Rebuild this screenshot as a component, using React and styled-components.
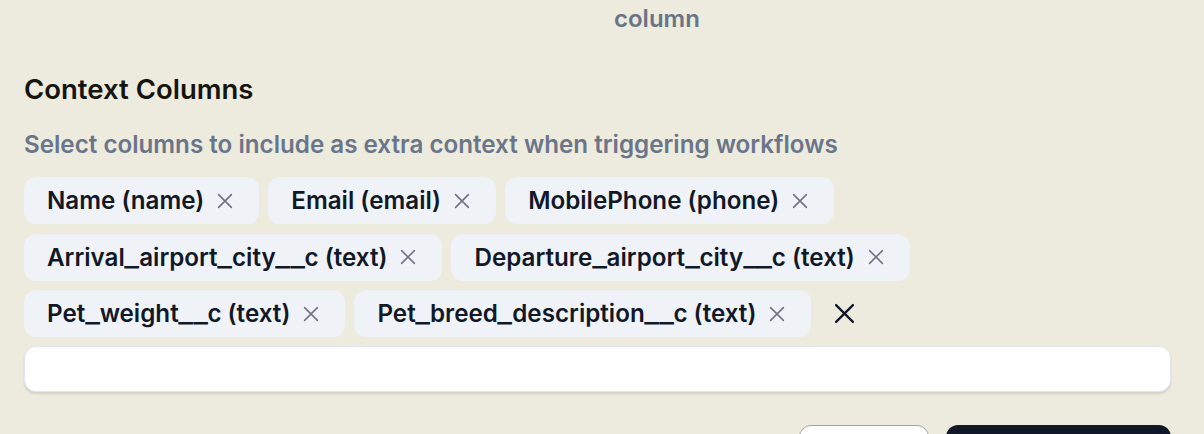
import React from "react";
import styled, { createGlobalStyle } from "styled-components";

const GlobalStyle = createGlobalStyle`
  html, body {
    margin: 0;
    padding: 0;
    background: #ecebdd;
    font-family: Inter, "Noto Sans", sans-serif;
    overflow: hidden;
  }
`;

const Page = styled.div`
  width: 1204px;
  height: 434px;
  box-sizing: border-box;
  padding: 0 33px 0 24px;
  background: #ecebdd;
  overflow: hidden;
`;

const ColumnLabel = styled.div`
  padding-left: 590px;
  padding-top: 4px;
  font-size: 24px;
  line-height: 30px;
  font-weight: 600;
  color: #6b7487;
`;

const Heading = styled.h2`
  margin: 38px 0 0;
  font-size: 27.5px;
  line-height: 34px;
  font-weight: 600;
  color: #16140f;
`;

const Subtitle = styled.p`
  margin: 24px 0 0;
  font-size: 24.2px;
  line-height: 30px;
  font-weight: 600;
  color: #6b7589;
`;

const TagList = styled.div`
  display: flex;
  flex-wrap: wrap;
  align-items: center;
  gap: 9.5px 9px;
  margin-top: 17px;
`;

const Tag = styled.div`
  display: flex;
  align-items: center;
  gap: 13px;
  height: 47px;
  box-sizing: border-box;
  padding: 0 26px 0 23px;
  border-radius: 12px;
  background: #eff2f7;
  font-size: 24.2px;
  font-weight: 600;
  color: #111827;
  white-space: nowrap;
`;

const Underscore = styled.span`
  display: inline-block;
  margin: 0 1.5px;
  transform: scaleX(1.3);
`;

const RemoveButton = styled.span`
  display: flex;
  color: #6b7280;
  flex: none;
`;

const ClearButton = styled.button`
  display: flex;
  align-items: center;
  justify-content: center;
  margin-left: 14px;
  padding: 0;
  border: none;
  background: transparent;
  color: #111827;
  cursor: pointer;
`;

const Input = styled.input`
  display: block;
  width: 100%;
  height: 46px;
  box-sizing: border-box;
  margin-top: 9px;
  border: 1px solid #e2e6ee;
  border-radius: 12px;
  background: #ffffff;
  box-shadow: 0 2px 2px rgba(30, 41, 59, 0.12);
  font-size: 22px;
  padding: 0 16px;
  outline: none;
`;

const Actions = styled.div`
  display: flex;
  justify-content: flex-end;
  gap: 17px;
  margin-top: 33px;
`;

const Button = styled.button`
  height: 48px;
  border-radius: 12px;
  box-sizing: border-box;
  width: ${(p) => (p.$primary ? "225px" : "130px")};
  background: ${(p) => (p.$primary ? "#111827" : "#ffffff")};
  border: ${(p) => (p.$primary ? "none" : "1.5px solid #a3a3a3")};
`;

const tags = [
  "Name (name)",
  "Email (email)",
  "MobilePhone (phone)",
  "Arrival_airport_city__c (text)",
  "Departure_airport_city__c (text)",
  "Pet_weight__c (text)",
  "Pet_breed_description__c (text)",
];

function XIcon({ size, stroke }) {
  return (
    <svg
      width={size}
      height={size}
      viewBox="0 0 20 20"
      fill="none"
      stroke="currentColor"
      strokeWidth={stroke}
      strokeLinecap="round"
    >
      <path d="M2 2l16 16M18 2L2 18" />
    </svg>
  );
}

// underscores are a bit wider in the original font
function Label({ text }) {
  const parts = text.split("_");
  return (
    <span>
      {parts.map((p, i) => (
        <React.Fragment key={i}>
          {i > 0 && <Underscore>_</Underscore>}
          {p}
        </React.Fragment>
      ))}
    </span>
  );
}

export default function App() {
  return (
    <Page>
      <GlobalStyle />
      <ColumnLabel>column</ColumnLabel>
      <Heading>Context Columns</Heading>
      <Subtitle>Select columns to include as extra context when triggering workflows</Subtitle>
      <TagList>
        {tags.map((t) => (
          <Tag key={t}>
            <Label text={t} />
            <RemoveButton>
              <XIcon size={16} stroke={1.9} />
            </RemoveButton>
          </Tag>
        ))}
        <ClearButton aria-label="Clear all">
          <XIcon size={21} stroke={2.2} />
        </ClearButton>
      </TagList>
      <Input />
      <Actions>
        <Button aria-label="Cancel" />
        <Button $primary aria-label="Save" />
      </Actions>
    </Page>
  );
}
